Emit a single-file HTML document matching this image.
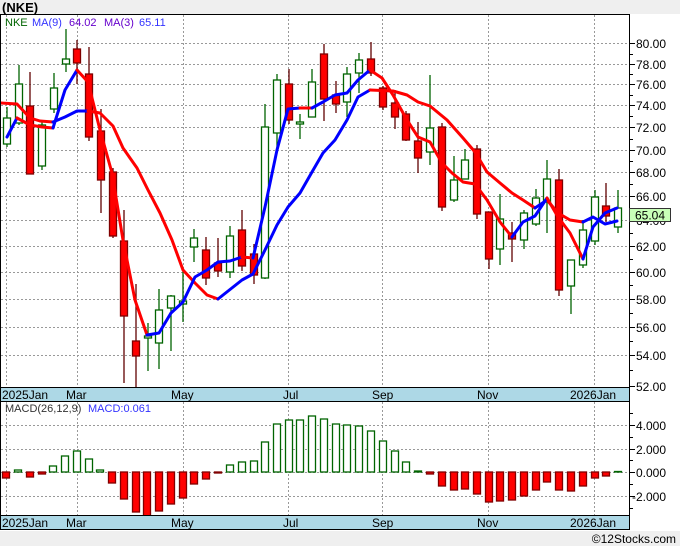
<!DOCTYPE html>
<html><head><meta charset="utf-8"><style>
html,body{margin:0;padding:0;background:#fff;}
svg{display:block;font-family:"Liberation Sans",sans-serif;}
</style></head><body>
<svg width="680" height="546" viewBox="0 0 680 546" xmlns="http://www.w3.org/2000/svg">
<rect x="0" y="0" width="680" height="546" fill="#fff"/>
<rect x="0" y="0" width="680" height="14" fill="#efefef"/>
<text x="2" y="12" font-size="13" font-weight="bold" fill="#000">(NKE)</text>
<rect x="0" y="531" width="680" height="15" fill="#efefef"/>
<text x="676" y="543" font-size="12" fill="#000" text-anchor="end">©12Stocks.com</text>
<defs><clipPath id="cm"><rect x="1" y="15" width="628" height="372"/></clipPath>
<clipPath id="cd"><rect x="1" y="402" width="628" height="113"/></clipPath></defs>
<!-- grid main -->
<g stroke="#999" stroke-width="1" stroke-dasharray="2,2">
<line x1="1" x2="629" y1="43.5" y2="43.5"/><line x1="1" x2="629" y1="64.5" y2="64.5"/><line x1="1" x2="629" y1="84.5" y2="84.5"/><line x1="1" x2="629" y1="105.5" y2="105.5"/><line x1="1" x2="629" y1="127.5" y2="127.5"/><line x1="1" x2="629" y1="150.5" y2="150.5"/><line x1="1" x2="629" y1="172.5" y2="172.5"/><line x1="1" x2="629" y1="196.5" y2="196.5"/><line x1="1" x2="629" y1="220.5" y2="220.5"/><line x1="1" x2="629" y1="246.5" y2="246.5"/><line x1="1" x2="629" y1="272.5" y2="272.5"/><line x1="1" x2="629" y1="299.5" y2="299.5"/><line x1="1" x2="629" y1="327.5" y2="327.5"/><line x1="1" x2="629" y1="355.5" y2="355.5"/>
<line x1="6.5" x2="6.5" y1="15" y2="387"/><line x1="77.5" x2="77.5" y1="15" y2="387"/><line x1="183.5" x2="183.5" y1="15" y2="387"/><line x1="288.5" x2="288.5" y1="15" y2="387"/><line x1="382.5" x2="382.5" y1="15" y2="387"/><line x1="488.5" x2="488.5" y1="15" y2="387"/><line x1="594.5" x2="594.5" y1="15" y2="387"/>
<line x1="1" x2="629" y1="425.5" y2="425.5"/><line x1="1" x2="629" y1="449.5" y2="449.5"/><line x1="1" x2="629" y1="472.5" y2="472.5"/><line x1="1" x2="629" y1="496.5" y2="496.5"/>
<line x1="6.5" x2="6.5" y1="402" y2="515"/><line x1="77.5" x2="77.5" y1="402" y2="515"/><line x1="183.5" x2="183.5" y1="402" y2="515"/><line x1="288.5" x2="288.5" y1="402" y2="515"/><line x1="382.5" x2="382.5" y1="402" y2="515"/><line x1="488.5" x2="488.5" y1="402" y2="515"/><line x1="594.5" x2="594.5" y1="402" y2="515"/>
</g>
<g clip-path="url(#cm)">
<g stroke-width="1.3">
<g stroke="#006400">
<line x1="7" x2="7" y1="107" y2="147"/><line x1="19" x2="19" y1="65" y2="125"/><line x1="42" x2="42" y1="120" y2="170"/><line x1="54" x2="54" y1="73" y2="113"/><line x1="66" x2="66" y1="29" y2="72"/><line x1="148" x2="148" y1="323" y2="371"/><line x1="159" x2="159" y1="289" y2="369"/><line x1="171" x2="171" y1="295" y2="351"/><line x1="183" x2="183" y1="270" y2="322"/><line x1="194" x2="194" y1="229" y2="262"/><line x1="230" x2="230" y1="226" y2="278"/><line x1="265" x2="265" y1="104" y2="279"/><line x1="277" x2="277" y1="74" y2="150"/><line x1="300" x2="300" y1="114" y2="139"/><line x1="312" x2="312" y1="69" y2="117"/><line x1="347" x2="347" y1="67" y2="117"/><line x1="359" x2="359" y1="53" y2="93"/><line x1="430" x2="430" y1="75" y2="165"/><line x1="454" x2="454" y1="156" y2="202"/><line x1="465" x2="465" y1="149" y2="179"/><line x1="500" x2="500" y1="194" y2="265"/><line x1="524" x2="524" y1="210" y2="249"/><line x1="536" x2="536" y1="189" y2="226"/><line x1="547" x2="547" y1="160" y2="233"/><line x1="571" x2="571" y1="260" y2="314"/><line x1="583" x2="583" y1="220" y2="268"/><line x1="595" x2="595" y1="190" y2="245"/><line x1="618" x2="618" y1="190" y2="233"/>
</g>
<g stroke="#600000">
<line x1="30" x2="30" y1="72" y2="174"/><line x1="77" x2="77" y1="40" y2="84"/><line x1="89" x2="89" y1="47" y2="141"/><line x1="101" x2="101" y1="109" y2="213"/><line x1="113" x2="113" y1="168" y2="238"/><line x1="124" x2="124" y1="210" y2="383"/><line x1="136" x2="136" y1="284" y2="388"/><line x1="206" x2="206" y1="237" y2="285"/><line x1="218" x2="218" y1="238" y2="277"/><line x1="242" x2="242" y1="210" y2="271"/><line x1="254" x2="254" y1="244" y2="284"/><line x1="289" x2="289" y1="69" y2="124"/><line x1="324" x2="324" y1="44" y2="121"/><line x1="336" x2="336" y1="81" y2="113"/><line x1="371" x2="371" y1="42" y2="76"/><line x1="383" x2="383" y1="86" y2="110"/><line x1="395" x2="395" y1="90" y2="129"/><line x1="406" x2="406" y1="111" y2="141"/><line x1="418" x2="418" y1="122" y2="173"/><line x1="442" x2="442" y1="123" y2="211"/><line x1="477" x2="477" y1="145" y2="219"/><line x1="489" x2="489" y1="212" y2="269"/><line x1="512" x2="512" y1="222" y2="262"/><line x1="559" x2="559" y1="169" y2="296"/><line x1="606" x2="606" y1="183" y2="222"/>
</g>
</g>
<g fill="#fff" stroke="#006400" stroke-width="1.3">
<rect x="3.5" y="118" width="7" height="26"/><rect x="15.5" y="84" width="7" height="39"/><rect x="38.5" y="125" width="7" height="41"/><rect x="50.5" y="88" width="7" height="21"/><rect x="62.5" y="59" width="7" height="5"/><rect x="144.5" y="336" width="7" height="2"/><rect x="155.5" y="310" width="7" height="33"/><rect x="167.5" y="296" width="7" height="12"/><rect x="179.5" y="301" width="7" height="3"/><rect x="190.5" y="238" width="7" height="9"/><rect x="226.5" y="236" width="7" height="36"/><rect x="261.5" y="127" width="7" height="151"/><rect x="273.5" y="80" width="7" height="53"/><rect x="296.5" y="122" width="7" height="2"/><rect x="308.5" y="82" width="7" height="35"/><rect x="343.5" y="74" width="7" height="28"/><rect x="355.5" y="60" width="7" height="13"/><rect x="426.5" y="128" width="7" height="24"/><rect x="450.5" y="180" width="7" height="20"/><rect x="461.5" y="160" width="7" height="19"/><rect x="496.5" y="219" width="7" height="30"/><rect x="520.5" y="213" width="7" height="27"/><rect x="532.5" y="198" width="7" height="26"/><rect x="543.5" y="179" width="7" height="23"/><rect x="567.5" y="260" width="7" height="26"/><rect x="579.5" y="230" width="7" height="35"/><rect x="591.5" y="197" width="7" height="44"/><rect x="614.5" y="208" width="7" height="19"/>
</g>
<g fill="#ff0000" stroke="#800000" stroke-width="1.3">
<rect x="26.5" y="106" width="7" height="68"/><rect x="73.5" y="49" width="7" height="14"/><rect x="85.5" y="74" width="7" height="63"/><rect x="97.5" y="131" width="7" height="49"/><rect x="109.5" y="172" width="7" height="64"/><rect x="120.5" y="241" width="7" height="75"/><rect x="132.5" y="341" width="7" height="15"/><rect x="202.5" y="250" width="7" height="28"/><rect x="214.5" y="263" width="7" height="8"/><rect x="238.5" y="230" width="7" height="36"/><rect x="250.5" y="254" width="7" height="21"/><rect x="285.5" y="84" width="7" height="36"/><rect x="320.5" y="54" width="7" height="45"/><rect x="332.5" y="95" width="7" height="9"/><rect x="367.5" y="59" width="7" height="14"/><rect x="379.5" y="88" width="7" height="19"/><rect x="391.5" y="103" width="7" height="14"/><rect x="402.5" y="114" width="7" height="26"/><rect x="414.5" y="141" width="7" height="17"/><rect x="438.5" y="127" width="7" height="80"/><rect x="473.5" y="149" width="7" height="65"/><rect x="485.5" y="212" width="7" height="47"/><rect x="508.5" y="233" width="7" height="6"/><rect x="555.5" y="180" width="7" height="110"/><rect x="602.5" y="206" width="7" height="10"/>
</g>
<g fill="none" stroke-width="3" stroke-linejoin="round" stroke-linecap="round">
<polyline stroke="#ff0000" points="0,103 17,104 30,118 40,121 53,122"/>
<polyline stroke="#0000ff" points="53,122 65,117 77,111 88,111"/>
<polyline stroke="#ff0000" points="88,111 100,113 113,126 123,148 137,168 148,190 160,213 172,240 183,270 195,283 207,295 218,299"/>
<polyline stroke="#0000ff" points="218,299 242,280 253,274 265,250 277,225 288,207 300,193 312,172 323,153 335,140 347,120 358,97 370,90"/>
<polyline stroke="#ff0000" points="370,90 393,91 407,95 418,102 430,106 447,120 463,138 475,152 487,172 500,183 512,193 523,200 535,208"/>
<polyline stroke="#0000ff" points="535,208 547,200"/>
<polyline stroke="#ff0000" points="547,200 558,213 570,220 583,222"/>
<polyline stroke="#0000ff" points="583,222 593,217 605,224 617,221"/>
<polyline stroke="#0000ff" points="7,137 17,118"/>
<polyline stroke="#ff0000" points="17,118 30,125 42,127 53,128"/>
<polyline stroke="#0000ff" points="53,128 65,90 77,70"/>
<polyline stroke="#ff0000" points="77,70 88,82 100,130 112,173 123,240 135,300 147,335"/>
<polyline stroke="#0000ff" points="147,335 159,333 171,313 183,302 195,277 207,270 218,262 230,261 242,257"/>
<polyline stroke="#ff0000" points="242,257 253,258"/>
<polyline stroke="#0000ff" points="253,258 265,207 277,150 288,109 300,108"/>
<polyline stroke="#ff0000" points="300,108 312,108"/>
<polyline stroke="#0000ff" points="312,108 323,102 335,95 347,93 358,80 370,70"/>
<polyline stroke="#ff0000" points="370,70 382,78 393,95 407,120 418,137 430,142 442,163 452,173 463,182 475,184 487,200 500,222 512,237"/>
<polyline stroke="#0000ff" points="512,237 523,222 535,216 547,198"/>
<polyline stroke="#ff0000" points="547,198 558,217 570,233 583,259"/>
<polyline stroke="#0000ff" points="583,259 593,227 605,213 617,208"/>
</g>
</g>
<rect x="1" y="15" width="100%" height="0" fill="none"/>
<text x="5" y="26" font-size="11" fill="#006400">NKE</text>
<text x="32" y="26" font-size="11" fill="#3333ff">MA(9)</text>
<text x="69" y="26" font-size="11" fill="#6600cc">64.02</text>
<text x="104" y="26" font-size="11" fill="#6600cc">MA(3)</text>
<text x="139" y="26" font-size="11" fill="#3333ff">65.11</text>
<!-- MACD bars -->
<g clip-path="url(#cd)" stroke-width="1.3">
<g fill="#fff" stroke="#006400">
<rect x="14.5" y="470" width="7" height="2"/><rect x="49.5" y="466" width="7" height="6"/><rect x="61.5" y="456" width="7" height="16"/><rect x="73.5" y="451" width="7" height="21"/><rect x="85.5" y="459" width="7" height="13"/><rect x="96.5" y="470" width="7" height="2"/><rect x="226.5" y="465" width="7" height="7"/><rect x="238.5" y="462" width="7" height="10"/><rect x="250.5" y="461" width="7" height="11"/><rect x="261.5" y="442" width="7" height="30"/><rect x="273.5" y="424" width="7" height="48"/><rect x="285.5" y="420" width="7" height="52"/><rect x="296.5" y="420" width="7" height="52"/><rect x="308.5" y="416" width="7" height="56"/><rect x="320.5" y="419" width="7" height="53"/><rect x="332.5" y="424" width="7" height="48"/><rect x="343.5" y="425" width="7" height="47"/><rect x="355.5" y="426" width="7" height="46"/><rect x="367.5" y="431" width="7" height="41"/><rect x="379.5" y="441" width="7" height="31"/><rect x="391.5" y="451" width="7" height="21"/><rect x="402.5" y="462" width="7" height="10"/><rect x="414.5" y="471" width="7" height="1"/><rect x="614.5" y="471.5" width="7" height="0.5"/>
</g>
<g fill="#ff0000" stroke="#800000">
<rect x="2.5" y="472" width="7" height="6"/><rect x="26.5" y="472" width="7" height="5"/><rect x="38.5" y="472" width="7" height="2"/><rect x="108.5" y="472" width="7" height="11"/><rect x="120.5" y="472" width="7" height="27"/><rect x="132.5" y="472" width="7" height="40"/><rect x="143.5" y="472" width="7" height="45"/><rect x="155.5" y="472" width="7" height="39"/><rect x="167.5" y="472" width="7" height="32"/><rect x="179.5" y="472" width="7" height="26"/><rect x="190.5" y="472" width="7" height="12"/><rect x="202.5" y="472" width="7" height="7"/><rect x="214.5" y="472" width="7" height="1"/><rect x="426.5" y="472" width="7" height="2"/><rect x="438.5" y="472" width="7" height="14"/><rect x="450.5" y="472" width="7" height="18"/><rect x="461.5" y="472" width="7" height="17"/><rect x="473.5" y="472" width="7" height="22"/><rect x="485.5" y="472" width="7" height="30"/><rect x="496.5" y="472" width="7" height="29"/><rect x="508.5" y="472" width="7" height="28"/><rect x="520.5" y="472" width="7" height="24"/><rect x="532.5" y="472" width="7" height="18"/><rect x="543.5" y="472" width="7" height="10"/><rect x="555.5" y="472" width="7" height="18"/><rect x="567.5" y="472" width="7" height="19"/><rect x="579.5" y="472" width="7" height="14"/><rect x="591.5" y="472" width="7" height="6"/><rect x="602.5" y="472" width="7" height="4"/>
</g>
</g>
<text x="5" y="412" font-size="11" fill="#333">MACD(26,12,9)</text>
<text x="88" y="412" font-size="11" fill="#3333ff">MACD:0.061</text>
<!-- axis bands -->
<rect x="0.5" y="387.5" width="629" height="14" fill="#add8e6" stroke="#000"/>
<rect x="0.5" y="515.5" width="629" height="14" fill="#add8e6" stroke="#000"/>
<g font-size="12" fill="#000">
<text x="2" y="399">2025Jan</text><text x="66" y="399">Mar</text><text x="171" y="399">May</text><text x="283" y="399">Jul</text><text x="372" y="399">Sep</text><text x="477" y="399">Nov</text><text x="570" y="399">2026Jan</text>
<text x="2" y="527">2025Jan</text><text x="66" y="527">Mar</text><text x="171" y="527">May</text><text x="283" y="527">Jul</text><text x="372" y="527">Sep</text><text x="477" y="527">Nov</text><text x="570" y="527">2026Jan</text>
</g>
<!-- frames -->
<rect x="0.5" y="14.5" width="629" height="373" fill="none" stroke="#000"/>
<rect x="0.5" y="401.5" width="629" height="114" fill="none" stroke="#000"/>
<!-- right axis ticks -->
<g stroke="#000" stroke-width="1">
<line x1="629" x2="635" y1="43.5" y2="43.5"/><line x1="629" x2="635" y1="64.5" y2="64.5"/><line x1="629" x2="635" y1="84.5" y2="84.5"/><line x1="629" x2="635" y1="105.5" y2="105.5"/><line x1="629" x2="635" y1="127.5" y2="127.5"/><line x1="629" x2="635" y1="150.5" y2="150.5"/><line x1="629" x2="635" y1="172.5" y2="172.5"/><line x1="629" x2="635" y1="196.5" y2="196.5"/><line x1="629" x2="635" y1="220.5" y2="220.5"/><line x1="629" x2="635" y1="246.5" y2="246.5"/><line x1="629" x2="635" y1="272.5" y2="272.5"/><line x1="629" x2="635" y1="299.5" y2="299.5"/><line x1="629" x2="635" y1="327.5" y2="327.5"/><line x1="629" x2="635" y1="355.5" y2="355.5"/><line x1="629" x2="635" y1="386.5" y2="386.5"/>
<line x1="629" x2="633" y1="54.5" y2="54.5"/><line x1="629" x2="633" y1="74.5" y2="74.5"/><line x1="629" x2="633" y1="95.5" y2="95.5"/><line x1="629" x2="633" y1="116.5" y2="116.5"/><line x1="629" x2="633" y1="139.5" y2="139.5"/><line x1="629" x2="633" y1="161.5" y2="161.5"/><line x1="629" x2="633" y1="184.5" y2="184.5"/><line x1="629" x2="633" y1="208.5" y2="208.5"/><line x1="629" x2="633" y1="233.5" y2="233.5"/><line x1="629" x2="633" y1="259.5" y2="259.5"/><line x1="629" x2="633" y1="285.5" y2="285.5"/><line x1="629" x2="633" y1="313.5" y2="313.5"/><line x1="629" x2="633" y1="341.5" y2="341.5"/><line x1="629" x2="633" y1="370.5" y2="370.5"/>
<line x1="629" x2="635" y1="425.5" y2="425.5"/><line x1="629" x2="635" y1="449.5" y2="449.5"/><line x1="629" x2="635" y1="472.5" y2="472.5"/><line x1="629" x2="635" y1="496.5" y2="496.5"/>
<line x1="629" x2="633" y1="413.5" y2="413.5"/><line x1="629" x2="633" y1="437.5" y2="437.5"/><line x1="629" x2="633" y1="460.5" y2="460.5"/><line x1="629" x2="633" y1="484.5" y2="484.5"/><line x1="629" x2="633" y1="508.5" y2="508.5"/>
</g>
<g font-size="12" fill="#000">
<text x="636" y="48">80.00</text><text x="636" y="69">78.00</text><text x="636" y="89">76.00</text><text x="636" y="110">74.00</text><text x="636" y="132">72.00</text><text x="636" y="155">70.00</text><text x="636" y="177">68.00</text><text x="636" y="201">66.00</text><text x="636" y="225">64.00</text><text x="636" y="251">62.00</text><text x="636" y="277">60.00</text><text x="636" y="304">58.00</text><text x="636" y="332">56.00</text><text x="636" y="360">54.00</text><text x="636" y="391">52.00</text>
<text x="636" y="430">4.000</text><text x="636" y="454">2.000</text><text x="636" y="477">0.000</text><text x="632" y="501">-2.000</text>
</g>
<rect x="629.5" y="208.5" width="41" height="13" fill="#c8ffb8" stroke="#333"/>
<text x="635" y="219.5" font-size="12" fill="#000">65.04</text>
</svg>
</body></html>
